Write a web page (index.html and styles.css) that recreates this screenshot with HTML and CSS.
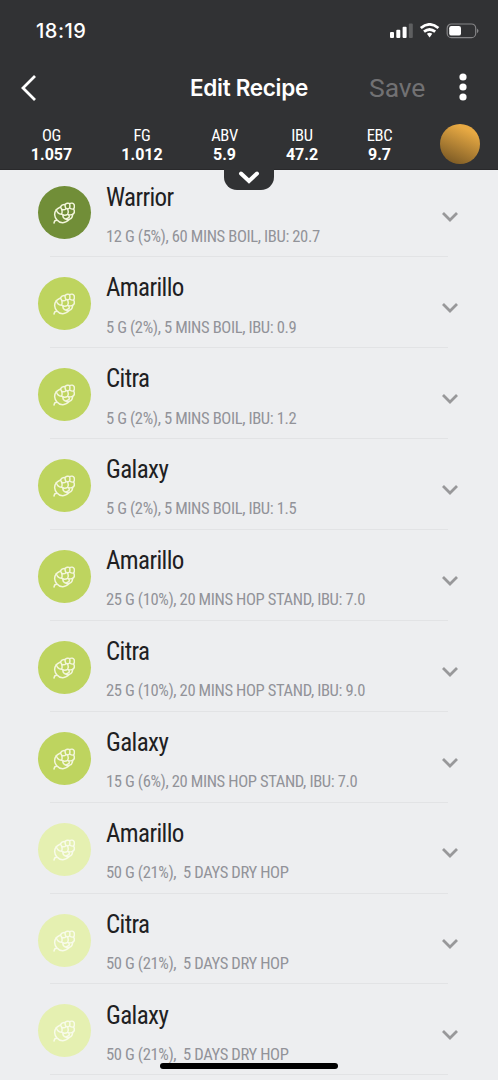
FILE: index.html
```
<!DOCTYPE html>
<html lang="en">
<head>
<meta charset="utf-8">
<title>Edit Recipe</title>
<link rel="stylesheet" href="styles.css">
</head>
<body>
<svg class="defs" width="0" height="0">
  <symbol id="hop" viewBox="0 0 66 66">
    <path d="M3 63 L5 57 L12 54 M12 54 C3 45 3 32 10 23 C14 19 18 18 22 15 C25 10 31 7 36 8 C38 4 46 2 50 5 C55 2 61 4 63 7 C65 13 64 18 62 21 C65 27 64 34 59 37 C59 44 56 50 49 52 C38 65 21 65 12 54"/>
    <path d="M10 23 C12 31 17 36 25 37 C29 32 28 22 22 15"/>
    <path d="M27 23 C32 24 36 23 39 20 C37 16 36 12 36 8 M39 20 C43 21 47 20 50 18 C51 13 51 9 50 5 M50 18 C54 21 58 22 62 21"/>
    <path d="M27 37 C31 40 39 40 44 37 C46 32 46 25 44 20 M44 37 C49 39 55 39 59 37"/>
    <path d="M30 39 C29 44 32 49 37 51 C42 51 46 48 49 45 C49 42 48 40 47 38 M37 51 C41 54 45 54 49 52"/>
  </symbol>
  <symbol id="chev" viewBox="0 0 18 12"><path d="M2 2 L9 9 L16 2"/></symbol>
</svg>
<div class="screen">
  <header class="header">
    <div class="status">
      <span class="clock">18:19</span>
      <svg class="indicators" width="90" height="16" viewBox="0 0 90 16">
        <g fill="#fff">
          <rect x="0" y="9" width="4" height="6" rx="1"/>
          <rect x="6.3" y="6.8" width="4" height="8.2" rx="1"/>
          <rect x="12.6" y="3.7" width="4" height="11.3" rx="1"/>
          <rect x="18.8" y="0.4" width="4" height="14.6" rx="1" opacity=".22"/>
          <path d="M36.9 10.7 Q39.6 8.7 42.3 10.7 L39.6 14.6Z"/>
        </g>
        <g fill="none" stroke="#fff" stroke-width="2.8">
          <path d="M30.8 5 Q39.6 -2.2 48.4 5"/>
          <path d="M34 8.7 Q39.6 4.2 45.2 8.7"/>
        </g>
        <rect x="57.2" y="1" width="28.5" height="13.6" rx="4.2" fill="none" stroke="#858587" stroke-width="1.2"/>
        <rect x="59.2" y="3" width="11.8" height="9.6" rx="2.2" fill="#fff"/>
        <path d="M87 5.5 Q90 7.8 87 10.2Z" fill="#858587"/>
      </svg>
    </div>
    <div class="nav">
      <svg class="back" width="18" height="28" viewBox="0 0 18 28"><path d="M15 2 L3 14 L15 26"/></svg>
      <h1 class="title">Edit Recipe</h1>
      <span class="save">Save</span>
      <svg class="more" width="8" height="28" viewBox="0 0 8 28"><circle cx="4" cy="4" r="3.6"/><circle cx="4" cy="14" r="3.6"/><circle cx="4" cy="24" r="3.6"/></svg>
    </div>
    <div class="stats">
      <div class="stat"><span>OG</span><b>1.057</b></div>
      <div class="stat"><span>FG</span><b>1.012</b></div>
      <div class="stat"><span>ABV</span><b>5.9</b></div>
      <div class="stat"><span>IBU</span><b>47.2</b></div>
      <div class="stat"><span>EBC</span><b>9.7</b></div>
      <div class="beer"></div>
    </div>
    <div class="pull"><svg width="22" height="15" viewBox="0 0 22 15"><path d="M3 4.5 L11 12 L19 4.5"/></svg></div>
  </header>
  <main class="list">
    <div class="row"><div class="badge boil"><svg class="hop"><use href="#hop"/></svg></div><div class="info"><h2>Warrior</h2><p>12 G (5%), 60 MINS BOIL, IBU: 20.7</p></div><svg class="chev"><use href="#chev"/></svg></div>
    <div class="row"><div class="badge"><svg class="hop"><use href="#hop"/></svg></div><div class="info"><h2>Amarillo</h2><p>5 G (2%), 5 MINS BOIL, IBU: 0.9</p></div><svg class="chev"><use href="#chev"/></svg></div>
    <div class="row"><div class="badge"><svg class="hop"><use href="#hop"/></svg></div><div class="info"><h2>Citra</h2><p>5 G (2%), 5 MINS BOIL, IBU: 1.2</p></div><svg class="chev"><use href="#chev"/></svg></div>
    <div class="row"><div class="badge"><svg class="hop"><use href="#hop"/></svg></div><div class="info"><h2>Galaxy</h2><p>5 G (2%), 5 MINS BOIL, IBU: 1.5</p></div><svg class="chev"><use href="#chev"/></svg></div>
    <div class="row"><div class="badge"><svg class="hop"><use href="#hop"/></svg></div><div class="info"><h2>Amarillo</h2><p>25 G (10%), 20 MINS HOP STAND, IBU: 7.0</p></div><svg class="chev"><use href="#chev"/></svg></div>
    <div class="row"><div class="badge"><svg class="hop"><use href="#hop"/></svg></div><div class="info"><h2>Citra</h2><p>25 G (10%), 20 MINS HOP STAND, IBU: 9.0</p></div><svg class="chev"><use href="#chev"/></svg></div>
    <div class="row"><div class="badge"><svg class="hop"><use href="#hop"/></svg></div><div class="info"><h2>Galaxy</h2><p>15 G (6%), 20 MINS HOP STAND, IBU: 7.0</p></div><svg class="chev"><use href="#chev"/></svg></div>
    <div class="row"><div class="badge dry"><svg class="hop"><use href="#hop"/></svg></div><div class="info"><h2>Amarillo</h2><p>50 G (21%),&nbsp; 5 DAYS DRY HOP</p></div><svg class="chev"><use href="#chev"/></svg></div>
    <div class="row"><div class="badge dry"><svg class="hop"><use href="#hop"/></svg></div><div class="info"><h2>Citra</h2><p>50 G (21%),&nbsp; 5 DAYS DRY HOP</p></div><svg class="chev"><use href="#chev"/></svg></div>
    <div class="row"><div class="badge dry"><svg class="hop"><use href="#hop"/></svg></div><div class="info"><h2>Galaxy</h2><p>50 G (21%),&nbsp; 5 DAYS DRY HOP</p></div><svg class="chev"><use href="#chev"/></svg></div>
  </main>
  <div class="home"></div>
</div>
</body>
</html>
```
FILE: styles.css
```
* { box-sizing: border-box; }
body { margin: 0; background: #edeef0; }
h1, h2, p { margin: 0; font-weight: 400; }
svg { display: block; flex: none; }
.defs { position: absolute; }
.screen {
  position: relative;
  width: 498px;
  height: 1080px;
  overflow: hidden;
  background: #edeef0;
  font-family: "Roboto Condensed", Roboto, sans-serif;
  font-stretch: 75%;
  white-space: nowrap;
}
.header { position: relative; z-index: 1; height: 170px; background: #313234; color: #fff; border-bottom: 1px solid #29292b; }
.status { display: flex; justify-content: space-between; height: 61px; padding: 20px 18px 0 36px; }
.clock { font: 500 20px/22px Inter, sans-serif; letter-spacing: 0.5px; }
.indicators { margin-top: 3px; }
.nav { display: grid; grid-template-columns: 169px 160px 102px 1fr; align-items: center; height: 53px; }
.back { margin-left: 20px; fill: none; stroke: #fff; stroke-width: 2.8; }
.title { font: 600 22.5px/28px Inter, sans-serif; text-align: center; letter-spacing: -0.3px; }
.save { font: 400 26.5px/30px Roboto, sans-serif; color: #717173; padding-left: 40px; letter-spacing: -0.1px; }
.more { margin-left: 28px; margin-top: -2px; fill: #fff; }
.stats { display: grid; grid-template-columns: 103px 78px 87px 68px 87px 1fr; height: 56px; }
.stat { display: flex; flex-direction: column; align-items: center; padding-top: 12px; font-size: 16.5px; line-height: 19px; letter-spacing: -0.3px; }
.stat b { font-family: Roboto, sans-serif; font-stretch: 100%; font-size: 16px; font-weight: 700; letter-spacing: 0; }
.beer { width: 40px; height: 40px; margin: 9.5px 0 0 17px; border-radius: 50%; background: linear-gradient(25deg, #7d5b25 10%, #e7a943 80%); }
.pull { position: absolute; left: 224px; top: 169px; width: 50px; height: 21px; border-radius: 0 0 13px 13px; background: #313234; display: flex; justify-content: center; }
.pull svg { fill: none; stroke: #fff; stroke-width: 4; stroke-linecap: round; }
.list { margin-top: -3.6px; padding: 0 50px; }
.row { display: flex; height: 90.9px; border-bottom: 1px solid #e2e3e5; }
.badge { flex: none; display: grid; place-items: center; width: 53px; height: 53px; margin: 20px 0 0 -12px; border-radius: 50%; background: #bed45f; }
.boil { background: #718e38; }
.dry { background: #e5f0b1; }
.hop { width: 22px; height: 22px; margin: 1px 1px 0 0; fill: none; stroke: #f3f6dc; stroke-width: 4.4; stroke-linejoin: round; stroke-linecap: round; }
.dry .hop { stroke: #f8fbea; }
.info { flex: 1; padding: 16.2px 0 0 15px; }
.info h2 { font-size: 25px; line-height: 30px; color: #202022; letter-spacing: -0.6px; }
.info p { margin-top: 14.2px; font-size: 16.6px; line-height: 20px; color: #929399; letter-spacing: -0.39px; }
.chev { width: 18px; height: 12px; margin: 44.8px -11px 0 0; fill: none; stroke: #98989a; stroke-width: 2.8; }
.home { position: absolute; z-index: 2; left: 160px; top: 1062.5px; width: 178px; height: 6.5px; border-radius: 4px; background: #000; }
```
